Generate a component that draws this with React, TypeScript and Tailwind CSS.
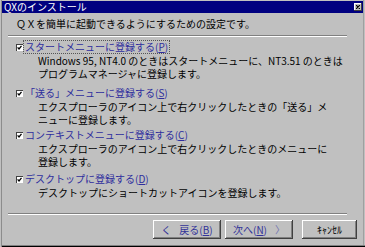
import React from "react";

const FONT = { fontFamily: '"Noto Sans CJK JP", "Noto Sans", sans-serif' };

function Check() {
  return (
    <span className="inline-flex w-[7px] h-[7px] bg-white shadow-[inset_1px_1px_#404040] items-center justify-center shrink-0">
      <svg width="5" height="5" viewBox="0 0 5 5">
        <path d="M0.6 2.4 L2 3.9 L4.5 0.9" stroke="#000" strokeWidth="1.3" fill="none" />
      </svg>
    </span>
  );
}

function Group({
  label,
  k,
  lines,
  focus,
  mt,
}: {
  label: string;
  k: string;
  lines: string[];
  focus?: boolean;
  mt: string;
}) {
  return (
    <div className={mt}>
      <div className="h-[14px] pl-[16px] flex items-center">
        <Check />
        <span
          className={
            "ml-[0px] px-[1px] leading-[12px] text-[10px] text-[#2e2e9e] border " +
            (focus ? "border-dotted border-[#555]" : "border-transparent")
          }
        >
          {label}(<span className="underline">{k}</span>)
        </span>
      </div>
      {lines.map((l, i) => (
        <div key={i} className="pl-[38px] text-[10px] leading-[13px] text-black whitespace-nowrap">
          {l}
        </div>
      ))}
    </div>
  );
}

function Btn({ w, ml, children }: { w: string; ml: string; children: React.ReactNode }) {
  return (
    <div
      className={
        w +
        " " +
        ml +
        " h-[19px] flex items-center justify-center bg-[#c0c0c0] shadow-[inset_-1px_-1px_#404040,inset_1px_1px_#ffffff,inset_-2px_-2px_#808080] text-[10px] leading-[12px]"
      }
    >
      {children}
    </div>
  );
}

export default function App() {
  return (
    <div
      style={FONT}
      className="w-[365px] h-[247px] bg-[#c0c0c0] flex flex-col overflow-hidden shadow-[inset_1px_0_#c0c0c0,inset_2px_0_#8c8c8c,inset_0_-1px_#000000,inset_0_-2px_#808080,inset_-1px_0_#c0c0c0,inset_-2px_0_#a0a0a0]"
    >
      <div className="mx-[2px] mt-[1px] h-[12px] bg-[#000080] flex items-center justify-between">
        <span className="pl-[2px] text-white text-[10px] leading-[12px]">QXのインストール</span>
        <span className="mr-[1px] w-[8px] h-[8px] bg-[#c0c0c0] shadow-[inset_-1px_-1px_#404040,inset_1px_1px_#ffffff] flex items-center justify-center">
          <svg width="4" height="4" viewBox="0 0 4 4">
            <path d="M0 0 L4 4 M4 0 L0 4" stroke="#000" strokeWidth="1.2" />
          </svg>
        </span>
      </div>

      <div className="mt-[4px] pl-[16px] text-[10px] leading-[14px] text-black">
        ＱＸを簡単に起動できるようにするための設定です。
      </div>

      <div className="mt-[4px] ml-[8px] mr-[18px] h-[2px] border-t border-[#808080] border-b border-b-white" />

      <Group
        mt="mt-[3px]"
        focus
        label="スタートメニューに登録する"
        k="P"
        lines={["Windows 95, NT4.0 のときはスタートメニューに、NT3.51 のときは", "プログラムマネージャに登録します。"]}
      />
      <Group
        mt="mt-[6px]"
        label="「送る」メニューに登録する"
        k="S"
        lines={["エクスプローラのアイコン上で右クリックしたときの「送る」メ", "ニューに登録します。"]}
      />
      <Group
        mt="mt-[2px]"
        label="コンテキストメニューに登録する"
        k="C"
        lines={["エクスプローラのアイコン上で右クリックしたときのメニューに", "登録します。"]}
      />
      <Group
        mt="mt-[4px]"
        label="デスクトップに登録する"
        k="D"
        lines={["デスクトップにショートカットアイコンを登録します。"]}
      />

      <div className="mt-auto ml-[8px] mr-[18px] h-[2px] border-t border-[#808080] border-b border-b-white" />
      <div className="mt-[5px] mb-[8px] flex justify-end pr-[8px]">
        <Btn w="w-[68px]" ml="ml-0">
          <span className="text-[#333399]">
            <span className="mr-[8px]">く</span>戻る(<span className="underline">B</span>)
          </span>
        </Btn>
        <Btn w="w-[68px]" ml="ml-[4px]">
          <span className="text-[#333399]">
            次へ(<span className="underline">N</span>)<span className="ml-[8px] text-[#7070b0]">〉</span>
          </span>
        </Btn>
        <Btn w="w-[55px]" ml="ml-[9px]">
          <span className="text-black">ｷｬﾝｾﾙ</span>
        </Btn>
      </div>
    </div>
  );
}
